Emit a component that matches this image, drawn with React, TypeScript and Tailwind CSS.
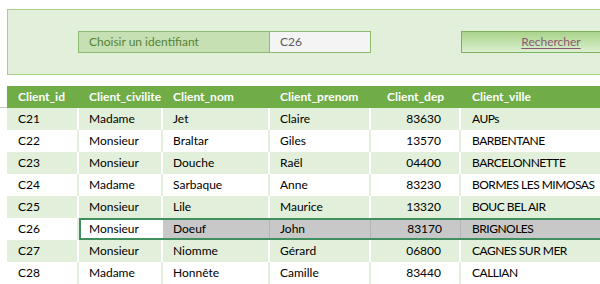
import React from "react";

type Client = {
  id: string;
  civilite: string;
  nom: string;
  prenom: string;
  dep: string;
  ville: string;
};

const clients: Client[] = [
  { id: "C21", civilite: "Madame", nom: "Jet", prenom: "Claire", dep: "83630", ville: "AUPs" },
  { id: "C22", civilite: "Monsieur", nom: "Braltar", prenom: "Giles", dep: "13570", ville: "BARBENTANE" },
  { id: "C23", civilite: "Monsieur", nom: "Douche", prenom: "Raël", dep: "04400", ville: "BARCELONNETTE" },
  { id: "C24", civilite: "Madame", nom: "Sarbaque", prenom: "Anne", dep: "83230", ville: "BORMES LES MIMOSAS" },
  { id: "C25", civilite: "Monsieur", nom: "Lile", prenom: "Maurice", dep: "13320", ville: "BOUC BEL AIR" },
  { id: "C26", civilite: "Monsieur", nom: "Doeuf", prenom: "John", dep: "83170", ville: "BRIGNOLES" },
  { id: "C27", civilite: "Monsieur", nom: "Niomme", prenom: "Gérard", dep: "06800", ville: "CAGNES SUR MER" },
  { id: "C28", civilite: "Madame", nom: "Honnête", prenom: "Camille", dep: "83440", ville: "CALLIAN" },
];

const selectedId = "C26";

function Row({ c, index }: { c: Client; index: number }) {
  const green = index % 2 === 0;
  const selected = c.id === selectedId;
  const base = green ? "bg-[#e2efda]" : "bg-white";
  const sep = green ? "border-white" : "border-[#e2efda]";
  const rest = selected ? "bg-[#c8c8c8]" : base;

  return (
    <div className={`flex h-[22px] items-center whitespace-nowrap ${base}`}>
      <div className={`w-[72px] h-full flex items-center pl-[11px] border-r-2 ${sep}`}>{c.id}</div>
      {selected ? (
        <div className="flex h-full flex-1 border-y-2 border-l-2 border-[#3f8f5f]">
          <div className="w-[82px] h-full flex items-center pl-[8px] bg-white">{c.civilite}</div>
          <div className={`w-[107px] h-full flex items-center pl-[10px] border-r border-[#b4b4b4] ${rest}`}>{c.nom}</div>
          <div className={`w-[101px] h-full flex items-center pl-[10px] border-r border-[#b4b4b4] ${rest}`}>{c.prenom}</div>
          <div className={`w-[90px] h-full flex items-center justify-end pr-[18px] border-r border-[#b4b4b4] ${rest}`}>{c.dep}</div>
          <div className={`flex-1 h-full flex items-center pl-[11px] tracking-[-0.5px] ${rest}`}>{c.ville}</div>
        </div>
      ) : (
        <>
          <div className={`w-[84px] h-full flex items-center pl-[10px] border-r-2 ${sep}`}>{c.civilite}</div>
          <div className={`w-[107px] h-full flex items-center pl-[10px] border-r-2 ${sep}`}>{c.nom}</div>
          <div className={`w-[101px] h-full flex items-center pl-[10px] border-r-2 ${sep}`}>{c.prenom}</div>
          <div className={`w-[90px] h-full flex items-center justify-end pr-[18px] border-r-2 ${sep}`}>{c.dep}</div>
          <div className="flex-1 h-full flex items-center pl-[11px] tracking-[-0.5px]">{c.ville}</div>
        </>
      )}
    </div>
  );
}

export default function App() {
  return (
    <div
      className="w-[600px] h-[284px] overflow-hidden bg-white text-[12px] text-black"
      style={{ fontFamily: "Lato, 'Liberation Sans', sans-serif" }}
    >
      {/* Search panel */}
      <div className="ml-[7px] mt-[9px] w-[640px] h-[66px] border border-[#a9cf8f] bg-[#e2efda] flex items-center pl-[70px]">
        <div className="w-[192px] h-[22px] border border-[#8dbb6f] bg-[#c6e0b4] flex items-center pl-[10px] text-[#548235]">
          Choisir un identifiant
        </div>
        <div className="w-[101px] h-[22px] border border-l-0 border-[#8dbb6f] bg-[#f4f4f4] flex items-center pl-[10px] text-[#595959]">
          C26
        </div>
        <div className="ml-[90px] w-[180px] h-[22px] border border-[#7fb05f] bg-gradient-to-b from-[#a9d48c] via-[#c2e2ac] to-[#dcefd0] flex items-center justify-center">
          <span className="text-[#8a5872] underline underline-offset-2">Rechercher</span>
        </div>
      </div>

      {/* Table */}
      <div className="relative mt-[11px] ml-[7px] w-[640px]">
        <div className="absolute -left-[7px] top-[21px] w-[7px] h-px bg-[#c8c8c8]" />
        <div className="flex h-[22px] items-center bg-[#70ad47] text-white font-bold whitespace-nowrap">
          <div className="w-[72px] pl-[11px]">Client_id</div>
          <div className="w-[84px] pl-[10px]">Client_civilite</div>
          <div className="w-[107px] pl-[10px]">Client_nom</div>
          <div className="w-[101px] pl-[10px]">Client_prenom</div>
          <div className="w-[90px] pl-[16px]">Client_dep</div>
          <div className="flex-1 pl-[11px]">Client_ville</div>
        </div>
        {clients.map((c, i) => (
          <Row key={c.id} c={c} index={i} />
        ))}
      </div>
    </div>
  );
}
